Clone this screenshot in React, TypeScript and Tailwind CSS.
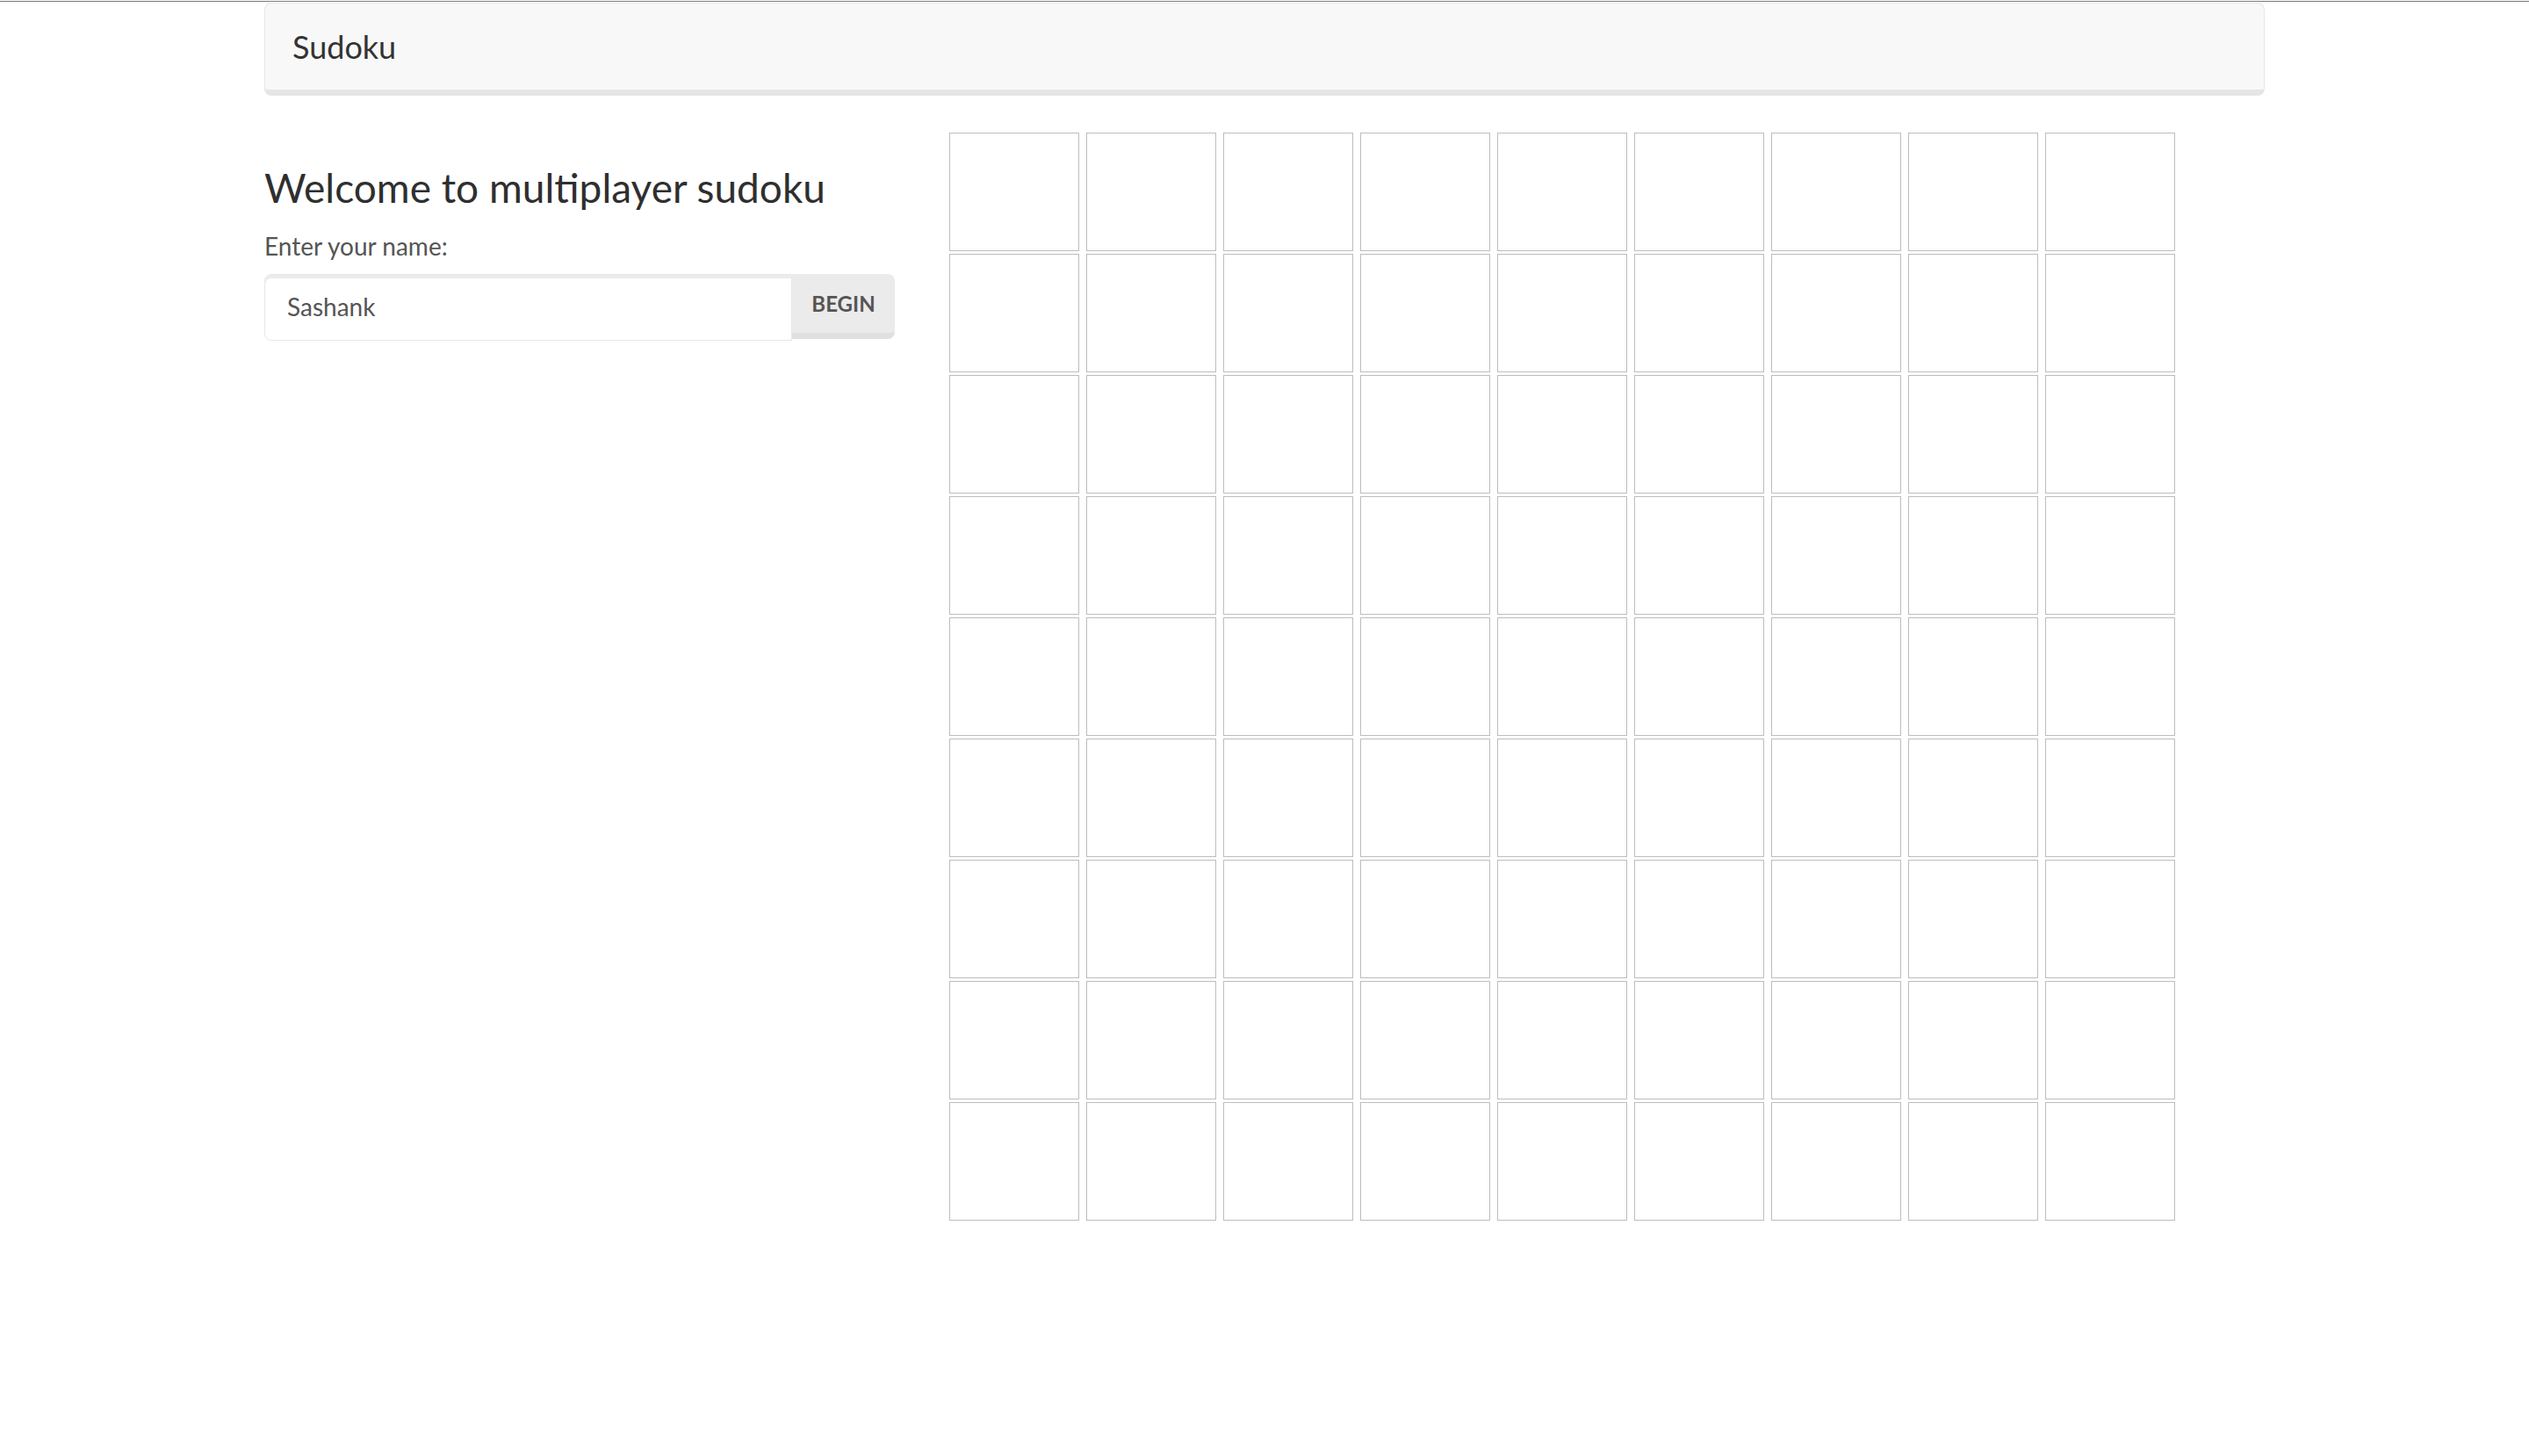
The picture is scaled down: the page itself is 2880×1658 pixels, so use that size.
import React from "react";

export default function App() {
  const cells = Array.from({ length: 81 }, (_, i) => i);
  return (
    <div className="min-h-screen bg-white font-['Lato','Noto_Sans',sans-serif]">
      <div className="h-px mt-px bg-[#7a7a7a]" />
      <div className="mx-auto w-[2278px]">
        <nav className="mt-px h-[106px] bg-[#f8f8f8] border border-[#e7e7e7] border-b-[7px] border-b-[#e5e5e5] rounded-[8px] flex items-center pl-[31px]">
          <span className="text-[36px] text-[#333] leading-none">Sudoku</span>
        </nav>
        <div className="flex mt-[42px]">
          <div className="w-[718px] pt-[34px]">
            <h3 className="text-[46px] leading-[58px] text-[#2f2f2f] mb-[20px]">Welcome to multiplayer sudoku</h3>
            <label className="block text-[28px] leading-[34px] text-[#555] mb-[15px]">Enter your name:</label>
            <div className="flex h-[76px]">
              <input
                type="text"
                defaultValue="Sashank"
                className="flex-1 min-w-0 bg-white border border-[#e7e7e7] rounded-l-[8px] shadow-[inset_0_4px_0_rgba(0,0,0,0.075)] pl-[25px] pb-[2px] text-[28px] text-[#555] outline-none"
              />
              <button className="w-[117px] h-[74px] bg-[#ebebeb] border-b-[7px] border-b-[#e0e0e0] rounded-r-[8px] text-[24px] font-bold text-[#555]">
                BEGIN
              </button>
            </div>
          </div>
          <div className="ml-[62px] grid grid-cols-[repeat(9,148px)] auto-rows-[135px] gap-x-[8px] gap-y-[3px]">
            {cells.map((i) => (
              <div key={i} className="border border-[#bdbdbd] bg-white" />
            ))}
          </div>
        </div>
      </div>
    </div>
  );
}
